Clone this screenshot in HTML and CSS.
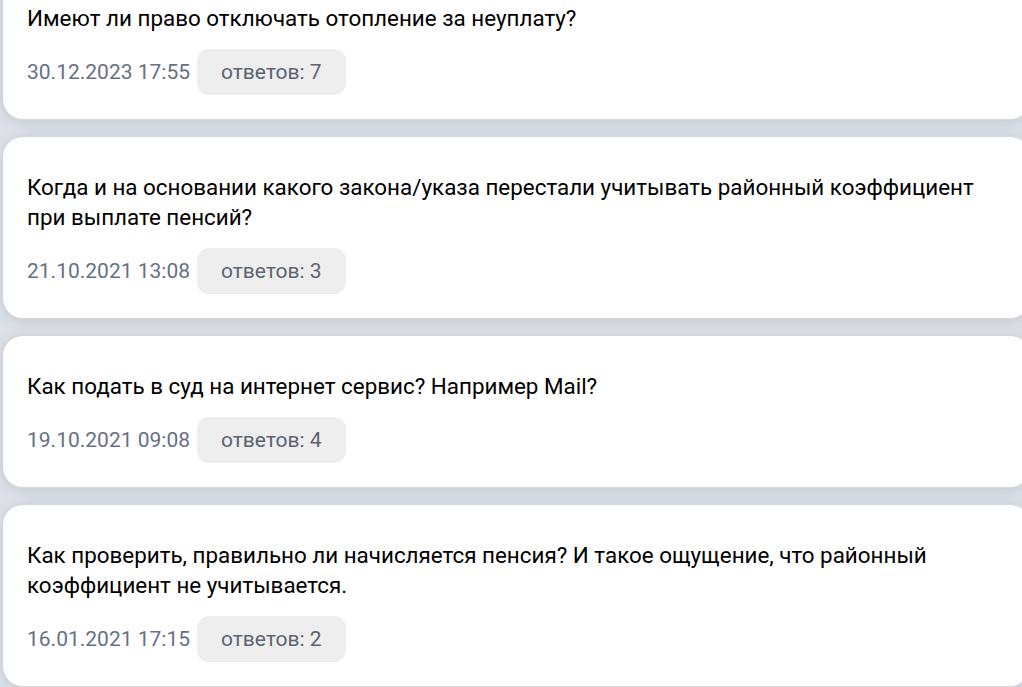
FILE: index.html
```html
<!DOCTYPE html>
<html lang="ru">
<head>
<meta charset="utf-8">
<title>Вопросы</title>
<link rel="stylesheet" href="styles.css">
</head>
<body>
<div class="list">
  <div class="card">
    <div class="title">Имеют ли право отключать отопление за неуплату?</div>
    <div class="meta"><span class="date">30.12.2023 17:55</span><span class="pill">ответов: 7</span></div>
  </div>
  <div class="card">
    <div class="title">Когда и на основании какого закона/указа перестали учитывать районный коэффициент при выплате пенсий?</div>
    <div class="meta"><span class="date">21.10.2021 13:08</span><span class="pill">ответов: 3</span></div>
  </div>
  <div class="card">
    <div class="title">Как подать в суд на интернет сервис? Например Mail?</div>
    <div class="meta"><span class="date">19.10.2021 09:08</span><span class="pill">ответов: 4</span></div>
  </div>
  <div class="card">
    <div class="title">Как проверить, правильно ли начисляется пенсия? И такое ощущение, что районный коэффициент не учитывается.</div>
    <div class="meta"><span class="date">16.01.2021 17:15</span><span class="pill">ответов: 2</span></div>
  </div>
</div>
</body>
</html>
```
FILE: styles.css
```css
html, body {
  margin: 0;
  padding: 0;
}
body {
  background: #dde1e7;
  font-family: Roboto, "Noto Sans", sans-serif;
  overflow: hidden;
  width: 1022px;
  height: 687px;
}
.list {
  display: flex;
  flex-direction: column;
  gap: 18px;
  margin-top: -32px;
  margin-left: 3px;
  width: 1027px;
}
.card {
  background: #fff;
  border-radius: 20px;
  padding: 35px 24px 24px 24px;
  box-shadow: 0 1px 0 #d9d6d6, 0 2px 14px rgba(110, 125, 150, 0.28);
}
.title {
  font-size: 22.4px;
  line-height: 30px;
  color: #000;
}
.meta {
  display: flex;
  align-items: center;
  margin-top: 16px;
}
.date {
  font-size: 21px;
  color: #667085;
  margin-right: 7px;
}
.pill {
  display: inline-flex;
  align-items: center;
  height: 46px;
  padding: 0 24px;
  background: #eeeeee;
  border-radius: 12px;
  font-size: 21px;
  color: #5c6373;
}
```
